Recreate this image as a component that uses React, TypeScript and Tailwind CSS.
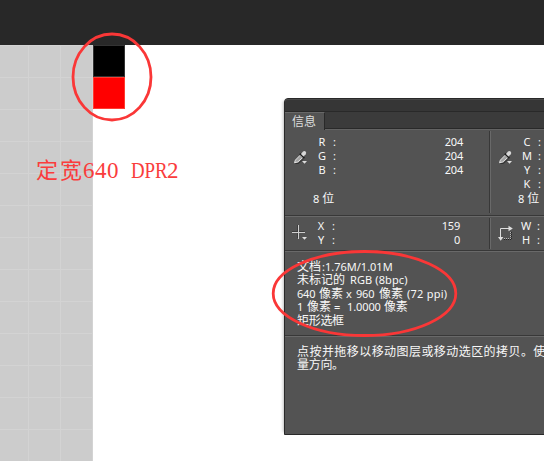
import type { ReactNode } from "react";

const GRID_ROWS = Array.from({ length: 14 }, (_, i) => i);

function Eyedropper() {
  return (
    <svg width="15" height="15" viewBox="0 0 15 15" className="shrink-0">
      <path d="M2.5 13.5h3L10.5 9" fill="none" stroke="#2e2e2e" strokeWidth=".9" />
      <path d="M1.5 12.7 2.4 10.1 7.2 5.2l2.4 2.4L4.8 12l-3.3.7Z" fill="#a2a2a2" stroke="#e2e2e2" strokeWidth="1" />
      <path d="m6.8 3.6 4.6 4.6" stroke="#1d1d1d" strokeWidth="1.6" />
      <path d="m8 4 1.8-2.3q1.6-1.3 2.8-.1 1.2 1.3 0 2.8L10.4 6.6 8 4Z" fill="#d8d8d8" />
      <path d="M9 11h5l-2.5 2.8Z" fill="#dedede" />
    </svg>
  );
}

function Crosshair() {
  return (
    <svg width="16" height="16" viewBox="0 0 16 16" className="shrink-0">
      <path d="M5.5 1v13M0 7.5h12.5" stroke="#3c3c3c" />
      <path d="M6.5 1v14M0 8.5h13" stroke="#cfcfcf" />
      <path d="M10 13h5l-2.5 2.8Z" fill="#dedede" />
    </svg>
  );
}

function SizeIcon() {
  return (
    <svg width="16" height="18" viewBox="0 0 16 18" className="shrink-0">
      <path d="M2.5 13V4.5H11" fill="none" stroke="#dedede" />
      <path d="M10.5 1.8 14.8 4.5 10.5 7.2ZM0 13h5.4l-2.7 3.8Z" fill="#dedede" />
      <path d="M13.5 8v8M6 15.5h8" fill="none" stroke="#202020" strokeDasharray="1 1" />
      <path d="M12.5 8v7M6 14.5h7" fill="none" stroke="#b7b7b7" strokeDasharray="1 1" />
    </svg>
  );
}

function Channel({ name, value }: { name: string; value?: string }) {
  return (
    <div className="flex h-[14px] items-center leading-[14px]">
      <span className="w-3 text-center">{name}</span>
      <span className="ml-[5px] w-1">:</span>
      {value && <span className="ml-auto tracking-[-0.2px]">{value}</span>}
    </div>
  );
}

function Bits() {
  return (
    <div className="flex h-[14px] items-center gap-[3px] pt-px text-[12px] leading-[14px]">
      <span className="text-[11px]">8</span>
      <span>位</span>
    </div>
  );
}

function Line({ children, className = "" }: { children: ReactNode; className?: string }) {
  return <div className={`flex h-[13.4px] whitespace-pre leading-[13.4px] ${className}`}>{children}</div>;
}

function Cjk({ children, className = "" }: { children: ReactNode; className?: string }) {
  return <span className={`shrink-0 text-[12px] ${className}`}>{children}</span>;
}

function InfoPanel() {
  return (
    <section className="absolute left-[284px] top-[98px] flex h-[337px] w-[300px] flex-col rounded-tl-[4px] border border-[#292929] bg-[#535353] font-['Noto_Sans','Noto_Sans_CJK_SC',sans-serif] text-[11px] text-[#f8f8f8] shadow-[-4px_0_3px_-3px_rgba(0,0,0,0.25)]">
      <div className="h-[12px] shrink-0 rounded-tl-[3px] border-t border-[#484848] bg-[#363636]" />
      <header className="flex h-[19px] shrink-0 border-b border-[#636363] border-t border-t-[#292929] bg-[#3b3b3b]">
        <div className="-mb-px flex w-10 items-center border-r border-t border-r-[#292929] border-t-[#686868] bg-[#535353] pl-[7px] text-[12px] leading-[16px] text-[#dedede]">
          信息
        </div>
        <div className="flex-1 border-b border-[#292929]" />
      </header>
      <div className="flex h-[86px] shrink-0 border-b border-[#383838] pb-[2px] pt-px">
        <div className="flex w-[205px] border-r border-[#383838] pl-2 pt-[4px]">
          <div className="pt-[15px]"><Eyedropper /></div>
          <div className="ml-[8px] w-[147px]">
            <Channel name="R" value="204" />
            <Channel name="G" value="204" />
            <Channel name="B" value="204" />
            <div className="-ml-[3px] mt-[14px]"><Bits /></div>
          </div>
        </div>
        <div className="flex flex-1 border-l border-[#696969] pl-[7px] pt-[4px]">
          <div className="pt-[15px]"><Eyedropper /></div>
          <div className="ml-[8px]">
            <Channel name="C" />
            <Channel name="M" />
            <Channel name="Y" />
            <Channel name="K" />
            <div className="-ml-[3px]"><Bits /></div>
          </div>
        </div>
      </div>
      <div className="flex h-[35px] shrink-0 border-b border-t border-b-[#383838] border-t-[#696969] py-px">
        <div className="flex w-[205px] border-r border-[#383838] pl-[7px] pt-px">
          <div className="pt-[5px]"><Crosshair /></div>
          <div className="ml-[7px] w-[145px]">
            <Channel name="X" value="159" />
            <Channel name="Y" value="0" />
          </div>
        </div>
        <div className="flex flex-1 border-l border-[#696969] pl-[7px] pt-px">
          <div className="pt-[5px]"><SizeIcon /></div>
          <div className="ml-[6px]">
            <Channel name="W" />
            <Channel name="H" />
          </div>
        </div>
      </div>
      <div className="h-[85px] shrink-0 border-b border-t border-b-[#383838] border-t-[#696969] pl-3 pt-[8px]">
        <Line>
          <Cjk className="w-[25px]">文档</Cjk>
          <span className="tracking-[0px]">:1.76M/1.01M</span>
        </Line>
        <Line>
          <Cjk className="w-[53px]">未标记的</Cjk>
          <span className="tracking-[0.1px]">RGB (8bpc)</span>
        </Line>
        <Line>
          <span className="w-[22px] tracking-[-0.2px]">640</span>
          <Cjk className="w-[27px]">像素</Cjk>
          <span className="w-[10px]">x</span>
          <span className="w-[23px] tracking-[-0.2px]">960</span>
          <Cjk className="w-[28px]">像素</Cjk>
          <span className="tracking-[0.25px]">(72 ppi)</span>
        </Line>
        <Line>
          <span className="w-[10px]">1</span>
          <Cjk className="w-[27px]">像素</Cjk>
          <span className="w-[13px]">=</span>
          <span className="w-[37px] tracking-[-0.1px]">1.0000</span>
          <Cjk className="tracking-[-0.3px]">像素</Cjk>
        </Line>
        <Line><Cjk className="tracking-[-0.3px]">矩形选框</Cjk></Line>
      </div>
      <div className="flex-1 border-t border-[#696969] pl-3 pt-[8px] text-[12px] tracking-[0.44px]">
        <Line>点按并拖移以移动图层或移动选区的拷贝。使</Line>
        <Line className="tracking-[-0.3px]">量方向。</Line>
      </div>
    </section>
  );
}

export default function App() {
  return (
    <main className="relative flex h-[461px] w-[544px] flex-col overflow-hidden bg-white">
      <div className="h-[45px] shrink-0 bg-[#282828]" />
      <div className="flex flex-1">
        <div className="flex h-[416px] w-[93px] flex-col overflow-hidden bg-[#cccccc]">
          {GRID_ROWS.map((row) => (
            <div key={row} className="flex h-8 shrink-0 border-t border-[#d3d3d3]">
              <div className="w-[29px] border-r border-[#d3d3d3]" />
              <div className="w-8 border-r border-[#d3d3d3]" />
              <div className="w-8 border-r border-[#d3d3d3]" />
            </div>
          ))}
        </div>
        <div className="w-8">
          <div className="h-8 border border-[#333] bg-black" />
          <div className="h-8 border border-[#ff3b30] bg-[#ff0000]" />
        </div>
      </div>
      <InfoPanel />
      <div className="absolute left-[36px] top-[157px] flex h-7 items-center whitespace-pre font-['Liberation_Serif','Noto_Sans_CJK_SC',serif] text-[23px] leading-7 text-[#fa3c3c]">
        <span className="w-[47px] text-[22px] tracking-[2px]">定宽</span>
        <span className="w-[48px] tracking-[0.5px]">640</span>
        <span className="w-[36px] origin-left scale-x-[0.82]">DPR</span>
        <span>2</span>
      </div>
      <svg width="544" height="461" viewBox="0 0 544 461" className="pointer-events-none absolute inset-0" fill="none" stroke="#fa3737" strokeWidth="2.8">
        <ellipse cx="112" cy="77" rx="39" ry="43" />
        <ellipse cx="364.5" cy="293.5" rx="91.3" ry="42" />
      </svg>
    </main>
  );
}
